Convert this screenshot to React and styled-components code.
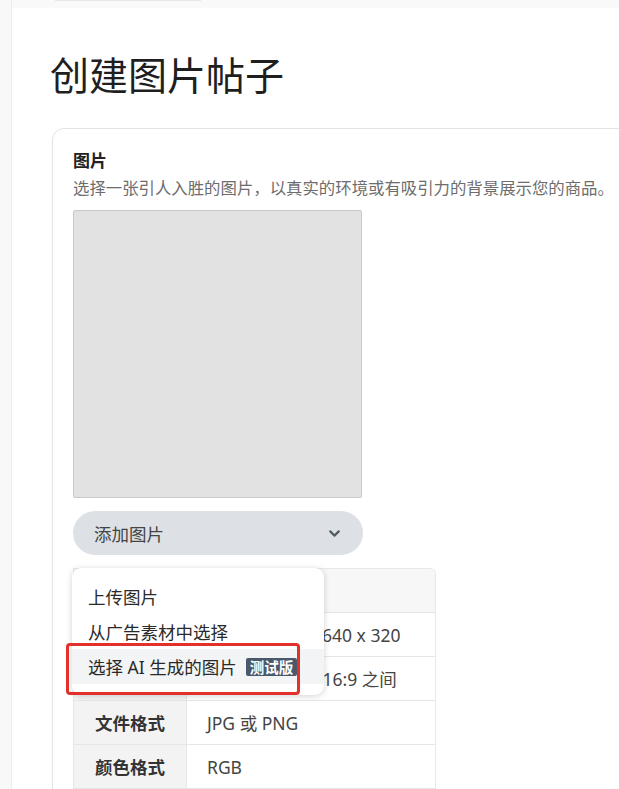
import React from "react";
import styled, { createGlobalStyle } from "styled-components";
import { ChevronDown } from "lucide-react";

const GlobalStyle = createGlobalStyle`
  html, body {
    margin: 0;
    padding: 0;
    background: #fff;
  }
  body {
    font-family: "Noto Sans", "Noto Sans CJK SC", sans-serif;
    color: #222;
  }
`;

const Shell = styled.div`
  display: flex;
  width: 619px;
  height: 789px;
  overflow: hidden;
`;

const Sidebar = styled.div`
  width: 11px;
  flex: none;
  background: #f8f8f8;
  border-right: 1px solid #ebebeb;
`;

const Main = styled.div`
  flex: 1;
  min-width: 0;
  display: flex;
  flex-direction: column;
`;

const TopBar = styled.div`
  height: 8px;
  flex: none;
  background: #f9f9f9;
  display: flex;
  padding-left: 43px;
`;

const TopTab = styled.div`
  width: 146px;
  height: 1px;
  background: #e6e6e6;
`;

const Content = styled.div`
  padding-left: 38px;
`;

const Title = styled.h1`
  margin: 42px 0 0;
  font-size: 39px;
  line-height: 50px;
  font-weight: 400;
  color: #1f1f1f;
`;

const Card = styled.section`
  margin: 28px 0 0 2px;
  width: 700px;
  border: 1px solid #e4e4e4;
  border-radius: 12px;
  padding: 19px 20px 60px;
  box-shadow: 0 0 2px rgba(0, 0, 0, 0.03);
`;

const Label = styled.div`
  font-size: 17px;
  line-height: 26px;
  font-weight: 700;
  color: #222;
`;

const Hint = styled.div`
  font-size: 16.4px;
  line-height: 28px;
  color: #6d6d6d;
  white-space: nowrap;
`;

const Placeholder = styled.div`
  margin-top: 8px;
  width: 287px;
  height: 286px;
  background: #e2e2e2;
  border: 1px solid #c9c9c9;
  border-radius: 2px;
`;

const Picker = styled.div`
  position: relative;
  margin-top: 13px;
  width: 290px;
`;

const PickerButton = styled.div`
  height: 44px;
  border-radius: 22px;
  background: #dde1e5;
  display: flex;
  align-items: center;
  justify-content: space-between;
  padding: 0 20px 0 21px;
  font-size: 17.5px;
  color: #444;
  svg {
    color: #505a64;
  }
`;

const Menu = styled.div`
  position: absolute;
  z-index: 2;
  left: -1px;
  top: 57px;
  width: 252px;
  padding: 11px 0;
  background: #fff;
  border-radius: 9px;
  box-shadow: 0 1px 6px rgba(0, 0, 0, 0.18);
`;

const MenuItem = styled.div`
  height: 35px;
  display: flex;
  align-items: center;
  gap: 9px;
  padding-left: 16px;
  font-size: 17.5px;
  color: #2a2a2a;
  background: ${(p) => (p.active ? "#f3f4f5" : "transparent")};
  white-space: nowrap;
`;

const Badge = styled.span`
  background: #49586b;
  color: #fff;
  font-size: 14.5px;
  font-weight: 700;
  line-height: 18px;
  padding: 0 4px;
  border-radius: 2px;
`;

const Highlight = styled.div`
  position: absolute;
  left: -6px;
  top: 75px;
  width: 228px;
  height: 46px;
  border: 3px solid #e3302a;
  border-radius: 4px;
`;

const Table = styled.div`
  margin-top: 13px;
  width: 362px;
  display: grid;
  grid-template-columns: 113px 1fr;
  border-top: 1px solid #e8e8e8;
  border-right: 1px solid #e8e8e8;
  border-top-right-radius: 6px;
  overflow: hidden;
`;

const Cell = styled.div`
  height: 43px;
  display: flex;
  align-items: center;
  border-bottom: 1px solid #e6e6e6;
  border-left: 1px solid #e6e6e6;
  font-size: 17.5px;
  white-space: nowrap;
  ${(p) =>
    p.head
      ? `justify-content: center; background: #f3f3f3; font-weight: 700; color: #333;`
      : `padding-left: 20px; background: #fff; color: #444;`}
  ${(p) => p.top && `background: #f7f7f7;`}
`;

const rows = [
  ["要求", ""],
  ["图片尺寸", "1280 x 720 或 640 x 320"],
  ["宽高比", "介于 1.91:1 到 16:9 之间"],
  ["文件格式", "JPG 或 PNG"],
  ["颜色格式", "RGB"],
];

export default function App() {
  return (
    <>
      <GlobalStyle />
      <Shell>
        <Sidebar />
        <Main>
          <TopBar>
            <TopTab />
          </TopBar>
          <Content>
            <Title>创建图片帖子</Title>
            <Card>
              <Label>图片</Label>
              <Hint>选择一张引人入胜的图片，以真实的环境或有吸引力的背景展示您的商品。</Hint>
              <Placeholder />
              <Picker>
                <PickerButton>
                  <span>添加图片</span>
                  <ChevronDown size={17} strokeWidth={3} />
                </PickerButton>
                <Menu>
                  <MenuItem>上传图片</MenuItem>
                  <MenuItem>从广告素材中选择</MenuItem>
                  <MenuItem active>
                    选择 AI 生成的图片 <Badge>测试版</Badge>
                  </MenuItem>
                  <Highlight />
                </Menu>
              </Picker>
              <Table>
                {rows.map(([k, v], i) => (
                  <React.Fragment key={k}>
                    <Cell head top={i === 0}>{k}</Cell>
                    <Cell top={i === 0}>{v}</Cell>
                  </React.Fragment>
                ))}
              </Table>
            </Card>
          </Content>
        </Main>
      </Shell>
    </>
  );
}
